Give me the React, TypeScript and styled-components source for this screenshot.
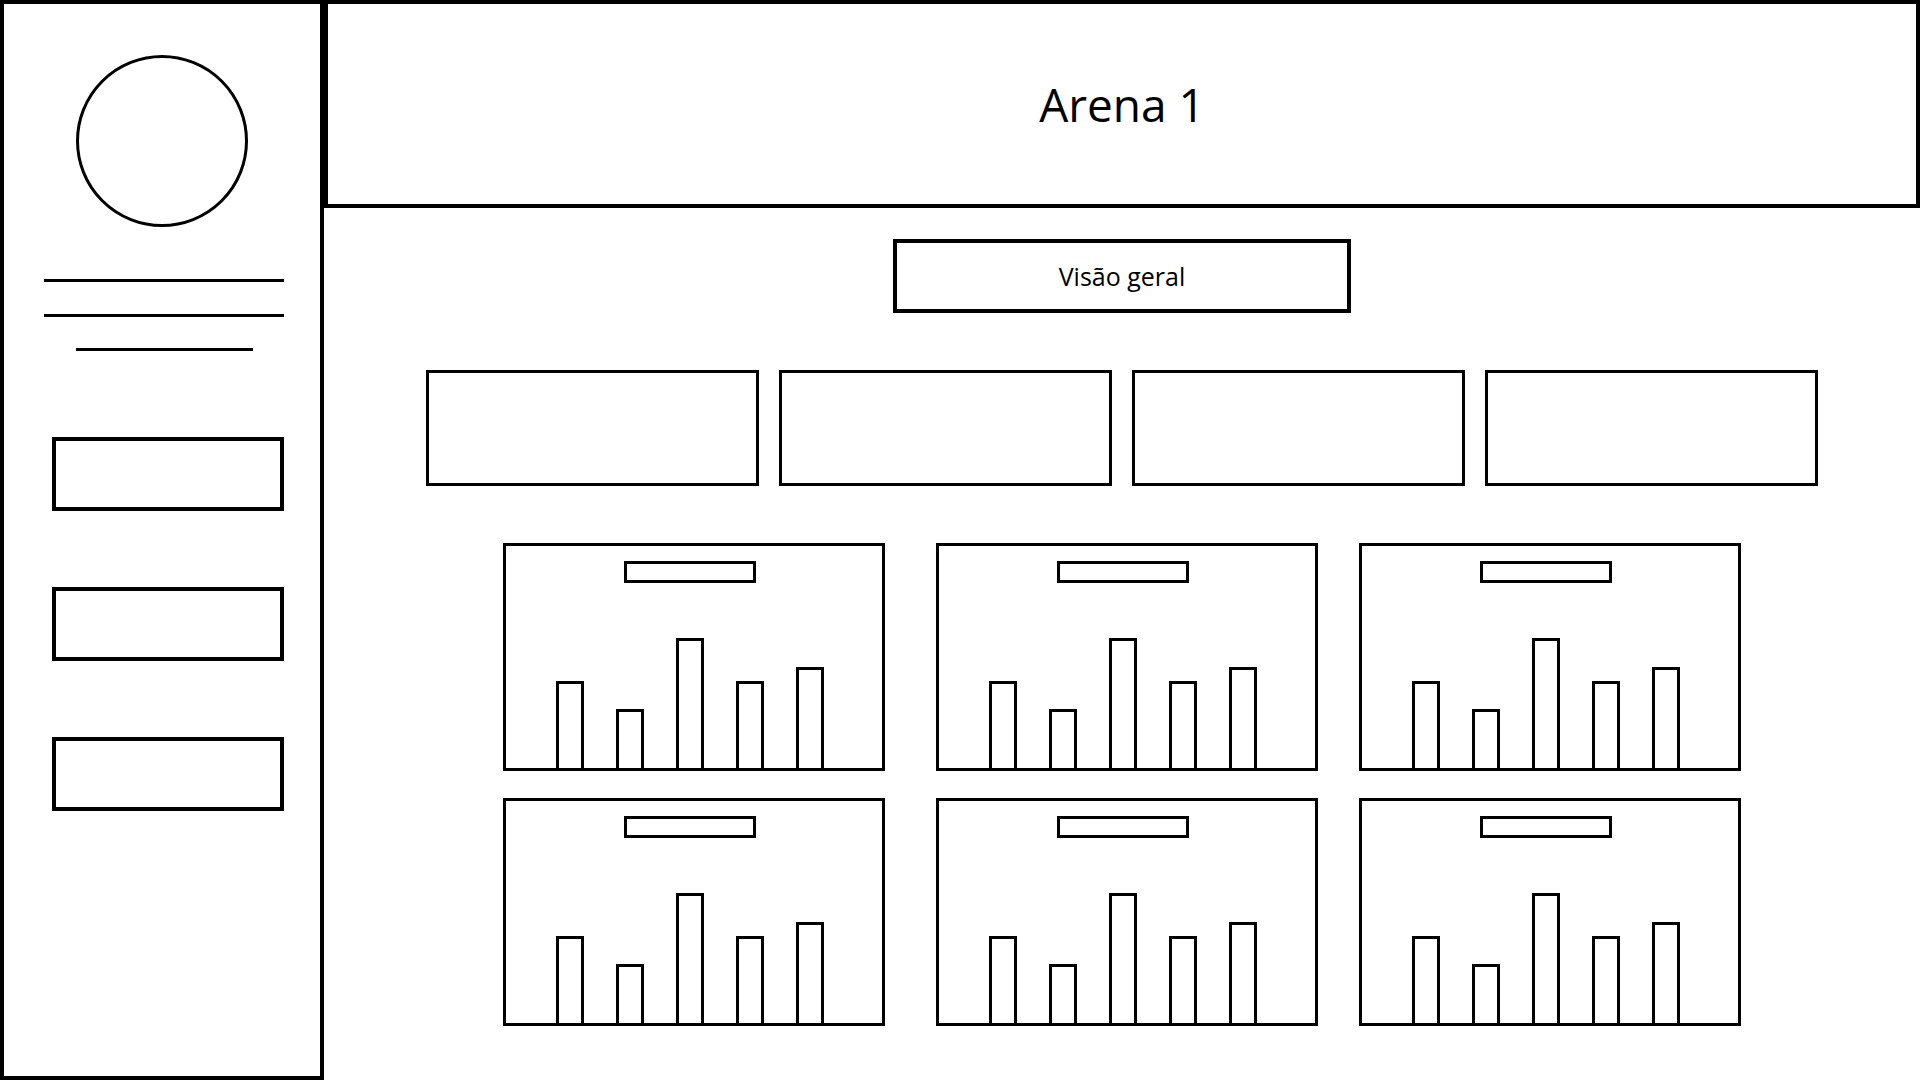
import styled, { createGlobalStyle } from "styled-components";

const GlobalStyle = createGlobalStyle`
  * {
    box-sizing: border-box;
  }

  body {
    margin: 0;
    background: #ffffff;
    font-family: "Open Sans", "Noto Sans", sans-serif;
    color: #000000;
  }
`;

const Layout = styled.div`
  display: flex;
  width: 1920px;
  height: 1080px;
  overflow: hidden;
`;

const Sidebar = styled.aside`
  width: 324px;
  height: 1080px;
  flex-shrink: 0;
  border: 4px solid #000;
  display: flex;
  flex-direction: column;
  align-items: center;
  padding-top: 51px;
`;

const Avatar = styled.div`
  width: 172px;
  height: 172px;
  border-radius: 50%;
  border: 3px solid #000;
`;

const InfoLine = styled.div<{ $width: number; $gap: number }>`
  width: ${({ $width }) => $width}px;
  height: 3px;
  background: #000;
  margin-top: ${({ $gap }) => $gap}px;
  margin-left: 4px;
`;

const NavList = styled.nav`
  display: flex;
  flex-direction: column;
  gap: 76px;
  margin-top: 86px;
  margin-left: 12px;
`;

const NavButton = styled.div`
  width: 232px;
  height: 74px;
  border: 4px solid #000;
`;

const Main = styled.main`
  flex: 1;
  display: flex;
  flex-direction: column;
  align-items: center;
`;

const Header = styled.header`
  align-self: stretch;
  height: 208px;
  border: 4px solid #000;
  display: flex;
  align-items: center;
  justify-content: center;

  h1 {
    margin: 0;
    font-size: 46px;
    font-weight: 400;
    line-height: 1;
  }
`;

const TabButton = styled.div`
  margin-top: 31px;
  width: 458px;
  height: 74px;
  border: 4px solid #000;
  display: flex;
  align-items: center;
  justify-content: center;
  font-size: 25px;
`;

const StatsRow = styled.div`
  display: flex;
  gap: 20px;
  margin-top: 57px;
`;

const StatCard = styled.div`
  width: 333px;
  height: 116px;
  border: 3px solid #000;
`;

const ChartGrid = styled.div`
  display: grid;
  grid-template-columns: repeat(3, 382px);
  column-gap: 46px;
  row-gap: 27px;
  margin-top: 57px;
`;

const ChartCard = styled.div`
  width: 382px;
  height: 228px;
  border: 3px solid #000;
  display: flex;
  flex-direction: column;
  align-items: center;
  justify-content: space-between;
  padding: 15px 8px 0 0;

  /* middle column sits a little right of the even split */
  &:nth-child(3n + 2) {
    margin-left: 5px;
  }
`;

const ChartTitle = styled.div`
  width: 132px;
  height: 22px;
  border: 3px solid #000;
`;

const Bars = styled.div`
  display: flex;
  align-items: flex-end;
  gap: 32px;
`;

const Bar = styled.div<{ $h: number }>`
  width: 28px;
  height: ${({ $h }) => $h}px;
  border: 3px solid #000;
  border-bottom: none;
`;

const barHeights = [87, 59, 130, 87, 101];

function Chart() {
  return (
    <ChartCard>
      <ChartTitle />
      <Bars>
        {barHeights.map((h, i) => (
          <Bar key={i} $h={h} />
        ))}
      </Bars>
    </ChartCard>
  );
}

export default function App() {
  return (
    <>
      <GlobalStyle />
      <Layout>
        <Sidebar>
          <Avatar />
          <InfoLine $width={240} $gap={52} />
          <InfoLine $width={240} $gap={32} />
          <InfoLine $width={177} $gap={31} />
          <NavList>
            <NavButton />
            <NavButton />
            <NavButton />
          </NavList>
        </Sidebar>

        <Main>
          <Header>
            <h1>Arena 1</h1>
          </Header>

          <TabButton>Visão geral</TabButton>

          <StatsRow>
            <StatCard />
            <StatCard />
            <StatCard />
            <StatCard />
          </StatsRow>

          <ChartGrid>
            {Array.from({ length: 6 }).map((_, i) => (
              <Chart key={i} />
            ))}
          </ChartGrid>
        </Main>
      </Layout>
    </>
  );
}
